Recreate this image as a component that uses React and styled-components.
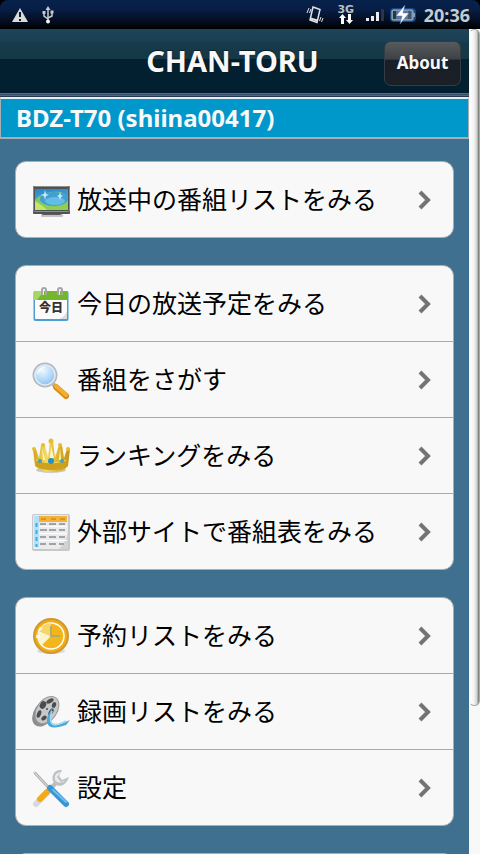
import React from 'react';
import styled, { createGlobalStyle } from 'styled-components';

const GlobalStyle = createGlobalStyle`
  * {
    box-sizing: border-box;
  }

  body {
    margin: 0;
    overflow: hidden;
    background: #f8f8f8;
    font-family: "Noto Sans", "Noto Sans CJK JP", sans-serif;
  }
`

const Screen = styled.div`
  display: flex;
  flex-direction: column;
  height: 100vh;
  overflow: hidden;
  background: #000;
`

const StatusBar = styled.div`
  display: flex;
  align-items: center;
  justify-content: space-between;
  flex: none;
  height: 29px;
  padding: 0 10px 0 12px;
  background: linear-gradient(#08214a 0%, #071f47 30%, #030d1e 75%, #000 100%);
  border-radius: 8px 8px 0 0;
`

const StatusGroup = styled.div`
  display: flex;
  align-items: center;
  gap: ${props => props.gap};
`

const Network = styled.span`
  display: flex;
  flex-direction: column;
  align-items: center;
  width: 18px;
  margin: 0 6px 0 8px;
  color: #b9bec6;
  font: bold 11px/9px "DejaVu Sans", sans-serif;
`

const Clock = styled.time`
  margin-left: 2px;
  color: #c3cccf;
  font-size: 18px;
  font-weight: 700;
  line-height: 28px;
`

const View = styled.div`
  display: flex;
  flex: 1;
  min-height: 0;
`

const Content = styled.main`
  flex: 1;
  min-width: 0;
  overflow: hidden;
  background: #407090;
`

const ScrollTrack = styled.div`
  flex: none;
  width: 11px;
  background: #f8f8f8;
`

const ScrollThumb = styled.div`
  height: 82%;
  border: 1px solid #a8a8a4;
  border-left-color: #f8f8f8;
  border-radius: 6px;
  background: linear-gradient(to right, #fff 0%, #f4f4f4 40%, #d4d4d2 75%, #6e706a 100%);
`

const Toolbar = styled.header`
  display: grid;
  grid-template-columns: 77px 1fr 77px;
  align-items: center;
  height: 68px;
  padding: 0 8px 4px;
  border-bottom: 1px solid #25384f;
  background: linear-gradient(#1e4459 0, #1a3f54 13px, #173b4b 13px, #153846 30px, #02202f 30px, #02202f 64px, #62799b 64px, #2a3f5a 66px, #8290a8 67px);
`

const Title = styled.h1`
  grid-column: 2;
  margin: 0;
  padding-right: 4px;
  color: #f8f8f8;
  font-size: 29px;
  line-height: 40px;
  text-align: center;
  text-shadow: 0 -1px 1px rgba(0, 0, 0, 0.5);
  white-space: nowrap;
`

const AboutButton = styled.button`
  height: 45px;
  margin-top: 5px;
  padding: 0;
  border: 1px solid #343d46;
  border-radius: 7px;
  background: linear-gradient(#585b5e 0%, #3d4145 40%, #181f26 42%, #1b2026 100%);
  color: #f8f8f8;
  font: bold 17px/26px "Noto Sans", sans-serif;
`

const DeviceName = styled.h2`
  height: 42px;
  margin: 0;
  padding: 0 15px;
  border: 1px solid #a9aeb2;
  border-top: 2px solid #e4eff4;
  border-bottom-width: 2px;
  background: #0098cb;
  color: #f8f8f8;
  font-size: 24px;
  line-height: 38px;
`

const Menu = styled.nav`
  display: flex;
  flex-direction: column;
  gap: 27px;
  padding: 22px 15px;
`

const MenuGroup = styled.ul`
  min-height: 77px;
  margin: 0;
  padding: 0;
  overflow: hidden;
  list-style: none;
  border: 1px solid #adadad;
  border-radius: 11px;
  background: #f8f8f8;
`

const MenuItem = styled.li`
  & + & {
    border-top: 1px solid #a9a9a9;
  }
`

const MenuLink = styled.a`
  display: flex;
  align-items: center;
  height: 75px;
  padding: 0 22px 0 15px;
  color: #000;
  font-family: "Noto Sans CJK JP", sans-serif;
  font-size: 25px;
  line-height: 36px;
  text-decoration: none;
  white-space: nowrap;
`

const MenuIcon = styled.svg`
  flex: none;
  width: 40px;
  height: 40px;
`

const MenuLabel = styled.span`
  flex: 1;
  padding: 0 0 3px 6px;
`

const TvIcon = () => (
  <MenuIcon viewBox="0 0 40 40" aria-hidden="true">
    <defs>
      <linearGradient id="tv" x1="0" y1="0" x2="0.2" y2="1">
        <stop offset="0" stopColor="#2a86cc" />
        <stop offset="0.5" stopColor="#3fa0d6" />
        <stop offset="1" stopColor="#8fcf5c" />
      </linearGradient>
    </defs>
    <rect x="10" y="34" width="22" height="3" rx="1" fill="#c4c4c4" />
    <path d="M13 32h15l2 3H11z" fill="#5c5c5c" />
    <rect x="2" y="6" width="37" height="28" rx="1" fill="#505254" />
    <rect x="2.5" y="6.5" width="36" height="25" rx="1" fill="none" stroke="#8b8d8e" />
    <rect x="4" y="9" width="33" height="21" fill="url(#tv)" />
    <path d="M4 20c5-7 16-9 26-8l7 5v13H4z" fill="#8fd04c" opacity="0.8" />
    <ellipse cx="23" cy="19" rx="14" ry="7" fill="#3f9fd6" />
    <ellipse cx="24" cy="21" rx="10" ry="4" fill="#64bde4" />
    <path d="M4 21c5 3 9 6 12 9H4z" fill="#c4e668" />
    <path d="M14 10l1 4 3 1-3 1-1 4-1-4-3-1 3-1zM29 12l1 3 2 1-2 1-1 3-1-3-2-1 2-1z" fill="#effbff" opacity="0.8" />
  </MenuIcon>
)

const TodayIcon = () => (
  <MenuIcon viewBox="0 0 40 40" aria-hidden="true">
    <rect x="2.5" y="7" width="35" height="30" rx="2" fill="#4d9ed2" />
    <rect x="4" y="12" width="32" height="23" rx="1" fill="#fbfbfb" />
    <path d="M3 9q0-2 2-2h30q2 0 2 2v7H3z" fill="#74b62c" />
    <path d="M3 9q0-2 2-2h8L6 16H3z" fill="#a7d56a" />
    <path d="M28 35q6-2 8-8v8z" fill="#d9dde0" />
    <path d="M11 11V6q0-2 2-2t2 2v5M27 11V6q0-2 2-2t2 2v5" fill="none" stroke="#a5a5a5" strokeWidth="2" />
    <path d="M12.500 11V6M28.500 11V6" stroke="#f0f0f0" />
    <text x="20" y="28" textAnchor="middle" fontSize="12" fontWeight="900" fontFamily="Noto Sans CJK JP, sans-serif" fill="#333">今日</text>
  </MenuIcon>
)

const SearchIcon = () => (
  <MenuIcon viewBox="0 0 40 40" aria-hidden="true">
    <defs>
      <radialGradient id="lens" cx="0.4" cy="0.3" r="0.75">
        <stop offset="0" stopColor="#eef8ff" />
        <stop offset="0.6" stopColor="#acd6f8" />
        <stop offset="1" stopColor="#7cb8ea" />
      </radialGradient>
    </defs>
    <path d="M22 24l4 4" stroke="#b4b8bb" strokeWidth="4" />
    <path d="M25 27l10 9" stroke="#d28c1c" strokeWidth="6" strokeLinecap="round" />
    <path d="M25 26l10 9" stroke="#f4ad2c" strokeWidth="4" strokeLinecap="round" />
    <circle cx="14" cy="15" r="11.500" fill="url(#lens)" stroke="#b4babf" strokeWidth="2" />
    <circle cx="14" cy="15" r="10" fill="none" stroke="#e2ebf1" strokeWidth="1.500" />
    <path d="M6 15c0-6 5-9 10-8-5 1-7 4-10 8z" fill="#fff" opacity="0.8" />
  </MenuIcon>
)

const CrownIcon = () => (
  <MenuIcon viewBox="0 0 40 40" aria-hidden="true">
    <defs>
      <linearGradient id="gold" x1="0" x2="1">
        <stop offset="0" stopColor="#cfa31c" />
        <stop offset="0.35" stopColor="#f3db66" />
        <stop offset="0.6" stopColor="#e2bc34" />
        <stop offset="1" stopColor="#c29414" />
      </linearGradient>
    </defs>
    <ellipse cx="20" cy="34" rx="15" ry="3" fill="#c9c9c9" />
    <path d="M9 15l6 4 5-6 6 6 6-4v12H9z" fill="#fbf0bd" />
    <path d="M2 13h3l3 9 2-13h4l3 13 2-17h3l2 17 4-13h3l2 13 3-9h3l-2 17q-5 6-16 6T4 30z" fill="url(#gold)" />
    <path d="M11 12l1 12h2zM20 10l-1 12h4zM29 12l-1 12h2z" fill="#fff7cb" />
    <path d="M4 23q16 7 32 0l-1 7q-5 4-15 4T5 30z" fill="#cda11e" />
    <path d="M5 24q15 6 30 0" fill="none" stroke="#f2d75a" />
    <g fill="#e6bd31">
      <circle cx="3" cy="13" r="2" />
      <circle cx="12" cy="9" r="2" />
      <circle cx="20" cy="5" r="2.500" />
      <circle cx="29" cy="9" r="2" />
      <circle cx="37" cy="13" r="2" />
    </g>
    <circle cx="20" cy="25" r="3" fill="#2492c9" />
    <circle cx="9" cy="25" r="2" fill="#3fa1bd" />
    <circle cx="31" cy="25" r="2" fill="#3fa1bd" />
  </MenuIcon>
)

const TableIcon = () => (
  <MenuIcon viewBox="0 0 40 40" aria-hidden="true">
    <rect x="1" y="2" width="38" height="37" rx="2" fill="#c6c8c9" />
    <rect x="2" y="3" width="35" height="34" rx="1" fill="#e9ebec" />
    <path d="M28 37q8-8 9-18v18z" fill="#d0d2d4" />
    <rect x="8" y="4" width="28" height="6" fill="#f3b23a" />
    <path d="M10 7h5M20 7h5M29 7h5" stroke="#e0921c" strokeWidth="2" />
    <rect x="3" y="4" width="5" height="31" fill="#b7e0f6" />
    <path d="M5.500 11v24" stroke="#46abdf" strokeWidth="2" strokeDasharray="4 3" />
    <path d="M8 14.500h28M8 21.500h28M8 28.500h28" stroke="#fff" />
    <path d="M9 12h6M18 12h7M28 12h6M9 18h7M18 18h7M28 18h6M9 25h6M18 25h7M28 25h6M9 32h6M18 32h7M28 32h5" stroke="#a2a2a2" strokeWidth="2" />
  </MenuIcon>
)

const ReserveIcon = () => (
  <MenuIcon viewBox="0 0 40 40" aria-hidden="true">
    <ellipse cx="20" cy="35" rx="14" ry="3" fill="#dadada" />
    <circle cx="20" cy="20" r="17" fill="#f2ad12" stroke="#cf9834" strokeWidth="2" />
    <circle cx="20" cy="20" r="13" fill="#f2b51c" stroke="#fff" strokeWidth="1.500" />
    <path d="M20 20L11 29A13 13 0 0 1 8 15z" fill="#fdf3cf" />
    <path d="M20 20L8 15A13 13 0 0 1 20 7z" fill="#f9d565" />
    <path d="M20 10v10h9" fill="none" stroke="#b0ad68" strokeWidth="2" />
    <path d="M7 14l2-3 3 1-3 3zM5 19h4v3H5z" fill="#fff" opacity="0.8" />
  </MenuIcon>
)

const FilmIcon = () => (
  <MenuIcon viewBox="0 0 40 40" aria-hidden="true">
    <ellipse cx="13" cy="21" rx="10" ry="15" transform="rotate(35 13 21)" fill="#8c8e90" />
    <ellipse cx="16" cy="18" rx="10" ry="15" transform="rotate(35 16 18)" fill="#c6c8c9" stroke="#9a9c9d" />
    <g fill="#4a4c4e">
      <ellipse cx="19" cy="9" rx="2" ry="4" transform="rotate(60 19 9)" />
      <ellipse cx="12" cy="13" rx="3" ry="4" transform="rotate(30 12 13)" />
      <ellipse cx="23" cy="13" rx="2" ry="3" transform="rotate(20 23 13)" />
      <ellipse cx="8" cy="22" rx="2" ry="4" transform="rotate(20 8 22)" />
      <ellipse cx="20" cy="20" rx="2" ry="4" transform="rotate(30 20 20)" />
      <ellipse cx="13" cy="26" rx="2" ry="3" transform="rotate(50 13 26)" />
      <circle cx="16" cy="17" r="1" />
    </g>
    <path d="M23 14c-3 6-5 12-3 17 3 5 10 1 19-3l-4 5c-7 2-12 4-17 1-5-5 0-14 5-20z" fill="#4aa9da" />
    <path d="M21 19c-2 6-2 11 1 13 4 2 8-1 13-3" fill="none" stroke="#a5dcf3" strokeWidth="1.500" />
  </MenuIcon>
)

const ToolsIcon = () => (
  <MenuIcon viewBox="0 0 40 40" aria-hidden="true">
    <path d="M4 5l15 16" stroke="#b0b3b5" strokeWidth="3" strokeLinecap="round" />
    <path d="M3 4l15 16" stroke="#dfe1e2" strokeLinecap="round" />
    <path d="M5 36l15-15" stroke="#d6d8d9" strokeWidth="6" strokeLinecap="round" />
    <path d="M9 31l7-7" stroke="#f3ab14" strokeWidth="6" strokeLinecap="round" />
    <path d="M19 21l8-8" stroke="#b9bcbe" strokeWidth="4" />
    <path d="M31 2c-7-1-11 5-9 11 3 7 12 7 16-4l-7 3-3-4z" fill="#bdc0c2" />
    <path d="M30 4c-5 0-7 4-6 8 3 4 8 3 11 0l-5 2-4-5z" fill="#e8eaeb" />
    <path d="M19 20l16 16" stroke="#3795d4" strokeWidth="6" strokeLinecap="round" />
    <path d="M22 22l13 12" stroke="#6dbdf0" strokeWidth="2" strokeLinecap="round" />
  </MenuIcon>
)

const Chevron = () => (
  <svg width="14" height="20" viewBox="0 0 14 20" aria-hidden="true">
    <path d="M3 2l8 8-8 8" fill="none" stroke="#747474" strokeWidth="4" />
  </svg>
)

const WarningIcon = () => (
  <svg width="16" height="14" viewBox="0 0 16 14">
    <path d="M8 0l8 14H0z" fill="#d9dadb" />
    <path d="M8 4v5M8 11v2" stroke="#101a30" strokeWidth="2" />
  </svg>
)

const UsbIcon = () => (
  <svg width="12" height="18" viewBox="0 0 12 18" fill="none" stroke="#c8cacc">
    <path d="M6 2v13M2 7v3l4 3M10 6v4l-4 2" strokeWidth="1.500" />
    <path d="M6 0l2.500 4h-5zM0.500 5h3v3h-3zM8.500 4.500h3v3h-3z" fill="#c8cacc" stroke="none" />
    <circle cx="6" cy="15.500" r="2" fill="#f4f4f4" stroke="none" />
  </svg>
)

const VibrateIcon = () => (
  <svg width="18" height="18" viewBox="0 0 18 18" fill="none" stroke="#dfe1e4">
    <path d="M7 1l7 2.500-3 13-7-2.500z" strokeWidth="1.500" />
    <path d="M4.500 12.500l7 2" strokeWidth="2" />
    <path d="M3 2L1 7M5 3L3.500 7M15 11l-1.500 4M17 12l-1.500 4" />
  </svg>
)

const DataArrows = () => (
  <svg width="14" height="10" viewBox="0 0 14 10" fill="#fff">
    <path d="M3.500 0L7 4H5v6H2V4H0zM10.500 10L7 6h2V0h3v6h2z" />
  </svg>
)

const SignalIcon = () => (
  <svg width="18" height="12" viewBox="0 0 18 12" fill="#e9ebee">
    <path d="M0 9h3v3H0zM5 7h3v5H5zM10 3h3v9h-3z" />
    <path d="M15 0h3v12h-3z" fill="#26344e" />
  </svg>
)

const BatteryIcon = () => (
  <svg width="28" height="20" viewBox="0 0 28 20">
    <rect x="1" y="3" width="26" height="14" rx="4" fill="#164784" />
    <rect x="3" y="5" width="21" height="10" rx="1" fill="#5f7599" stroke="#aebccd" />
    <path d="M24 8h2v4h-2z" fill="#8aa0b0" />
    <path d="M4 6h3v8H4z" fill="#263d29" />
    <path d="M19 6h3v8h-3z" fill="#3f566b" />
    <path d="M16 0L7 11h6l-2 8 9-11h-6z" fill="#fff" stroke="#3f77ba" strokeWidth="0.500" />
  </svg>
)

const menuGroups = [
  [{ label: '放送中の番組リストをみる', icon: TvIcon }],
  [
    { label: '今日の放送予定をみる', icon: TodayIcon },
    { label: '番組をさがす', icon: SearchIcon },
    { label: 'ランキングをみる', icon: CrownIcon },
    { label: '外部サイトで番組表をみる', icon: TableIcon }
  ],
  [
    { label: '予約リストをみる', icon: ReserveIcon },
    { label: '録画リストをみる', icon: FilmIcon },
    { label: '設定', icon: ToolsIcon }
  ],
  []
]

function App() {
  return (
    <Screen lang="ja">
      <GlobalStyle />
      <StatusBar>
        <StatusGroup gap="14px">
          <WarningIcon />
          <UsbIcon />
        </StatusGroup>
        <StatusGroup gap="5px">
          <VibrateIcon />
          <Network>
            3G
            <DataArrows />
          </Network>
          <SignalIcon />
          <BatteryIcon />
          <Clock>20:36</Clock>
        </StatusGroup>
      </StatusBar>
      <View>
        <Content>
          <Toolbar>
            <Title>CHAN-TORU</Title>
            <AboutButton type="button">About</AboutButton>
          </Toolbar>
          <DeviceName>BDZ-T70 (shiina00417)</DeviceName>
          <Menu>
            {menuGroups.map((items, index) => (
              <MenuGroup key={index}>
                {items.map(({ label, icon: Icon }) => (
                  <MenuItem key={label}>
                    <MenuLink href="#">
                      <Icon />
                      <MenuLabel>{label}</MenuLabel>
                      <Chevron />
                    </MenuLink>
                  </MenuItem>
                ))}
              </MenuGroup>
            ))}
          </Menu>
        </Content>
        <ScrollTrack>
          <ScrollThumb />
        </ScrollTrack>
      </View>
    </Screen>
  )
}

export default App;
